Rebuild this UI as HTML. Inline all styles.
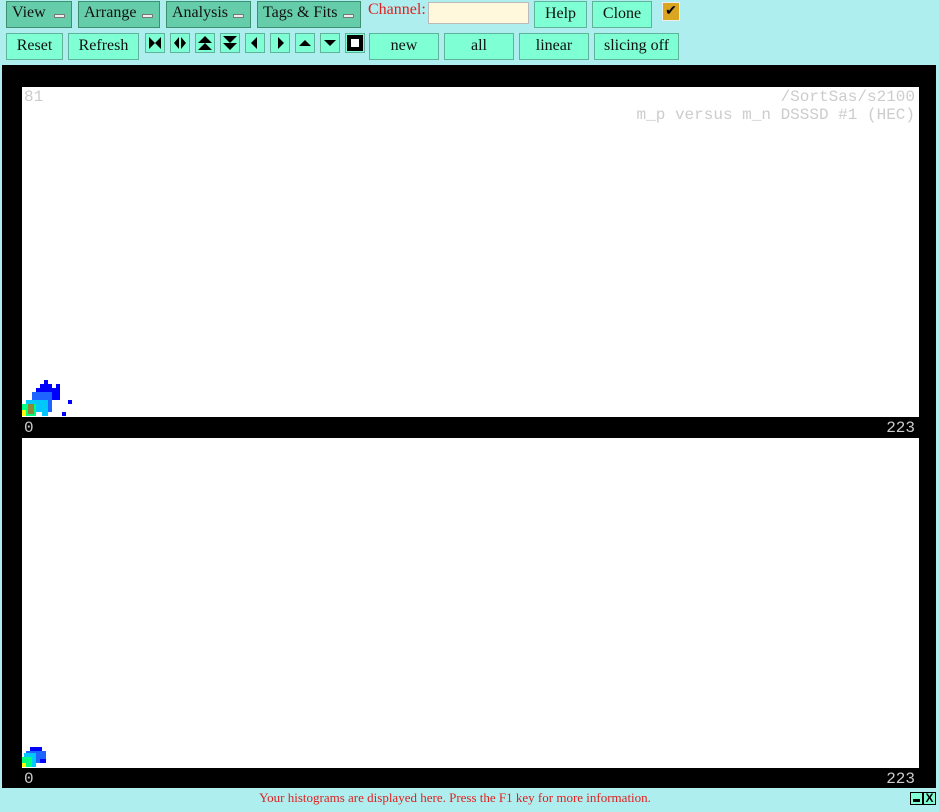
<!DOCTYPE html>
<html><head><meta charset="utf-8"><style>
*{box-sizing:border-box;margin:0;padding:0}
body{width:939px;height:812px;background:#afeeee;font-family:"Liberation Serif",serif;position:relative;overflow:hidden}
.b{position:absolute;border:1px solid #5fb39a;font-size:16px;text-align:center;color:#111}
.m{background:#66cdaa;border-color:#3d8f70;text-align:left;padding-left:5px;line-height:22px}
.m i{position:absolute;right:6px;top:12px;width:11px;height:4px;background:#eee;border:1px solid #777}
.g{background:#7fffd4;line-height:24px}
.a{position:absolute;top:33px;width:20px;height:20px;background:#7fffd4;border:1px solid #5fb39a}
.a svg{display:block}
#blk{position:absolute;left:2px;top:65px;width:934px;height:723px;background:#000}
.p{position:absolute;left:22px;width:897px;background:#fff}
.t{position:absolute;font-family:"Liberation Mono",monospace;font-size:16px;line-height:18px;color:#ccc}
</style></head><body>
<div class="b m" style="left:6px;top:1px;width:66px;height:27px">View<i></i></div>
<div class="b m" style="left:78px;top:1px;width:82px;height:27px">Arrange<i></i></div>
<div class="b m" style="left:166px;top:1px;width:85px;height:27px">Analysis<i></i></div>
<div class="b m" style="left:257px;top:1px;width:104px;height:27px">Tags &amp; Fits<i></i></div>
<div style="position:absolute;left:368px;top:1px;color:#e02020;font-size:16px">Channel:</div>
<div style="position:absolute;left:428px;top:2px;width:101px;height:22px;background:#fff8dc;border:1px solid #bbb"></div>
<div class="b g" style="left:534px;top:1px;width:53px;height:27px">Help</div>
<div class="b g" style="left:592px;top:1px;width:60px;height:27px">Clone</div>
<div style="position:absolute;left:662px;top:2px;width:18px;height:19px;background:#daa520;border:1px solid #eee;font-size:14px;line-height:17px;text-align:center">✔</div>
<div class="b g" style="left:6px;top:33px;width:57px;height:27px">Reset</div>
<div class="b g" style="left:68px;top:33px;width:71px;height:27px">Refresh</div>
<div class="a" style="left:145px"><svg width="18" height="18"><path d="M3 3L9 9L3 15ZM15 3L9 9L15 15Z"/></svg></div>
<div class="a" style="left:170px"><svg width="18" height="18"><path d="M8 3L3 9L8 15ZM10 3L15 9L10 15Z"/></svg></div>
<div class="a" style="left:195px"><svg width="18" height="18"><path d="M9 2L16 9H2ZM9 9L16 16H2Z"/></svg></div>
<div class="a" style="left:220px"><svg width="18" height="18"><path d="M2 2H16L9 9ZM2 9H16L9 16Z"/></svg></div>
<div class="a" style="left:245px"><svg width="18" height="18"><path d="M11 3L5 9L11 15Z"/></svg></div>
<div class="a" style="left:270px"><svg width="18" height="18"><path d="M7 3L13 9L7 15Z"/></svg></div>
<div class="a" style="left:295px"><svg width="18" height="18"><path d="M3 12L9 6L15 12Z"/></svg></div>
<div class="a" style="left:320px"><svg width="18" height="18"><path d="M3 6L9 12L15 6Z"/></svg></div>
<div class="a" style="left:345px"><svg width="18" height="18"><rect x="1" y="1" width="16" height="16"/><rect x="5" y="5" width="8" height="8" fill="#fff"/></svg></div>
<div class="b g" style="left:369px;top:33px;width:70px;height:27px">new</div>
<div class="b g" style="left:444px;top:33px;width:70px;height:27px">all</div>
<div class="b g" style="left:519px;top:33px;width:70px;height:27px">linear</div>
<div class="b g" style="left:594px;top:33px;width:85px;height:27px">slicing off</div>

<div id="blk"></div>
<div class="p" style="top:87px;height:330px"></div>
<div class="t" style="left:24px;top:88px">81</div>
<div class="t" style="right:24px;top:88px;text-align:right">/SortSas/s2100<br>m_p versus m_n DSSSD #1 (HEC)</div>
<svg style="position:absolute;left:22px;top:380px" width="60" height="37">
<g fill="#0000ff"><rect x="22" y="0" width="4" height="4"/><rect x="18" y="4" width="12" height="4"/><rect x="34" y="4" width="4" height="8"/><rect x="14" y="8" width="20" height="4"/><rect x="46" y="20" width="4" height="4"/><rect x="40" y="32" width="4" height="4"/><rect x="30" y="12" width="8" height="8"/></g>
<g fill="#1e64ff"><rect x="10" y="12" width="20" height="8"/><rect x="6" y="20" width="24" height="12"/></g>
<g fill="#00c8ff"><rect x="4" y="20" width="16" height="12"/><rect x="20" y="20" width="6" height="16"/></g>
<g fill="#00ff80"><rect x="0" y="24" width="14" height="12"/></g>
<rect x="0" y="30" width="4" height="6" fill="#ff0"/>
<rect x="6" y="24" width="6" height="10" fill="#8a8a3a"/>
</svg>
<div class="t" style="left:24px;top:419px">0</div>
<div class="t" style="right:24px;top:419px">223</div>

<div class="p" style="top:438px;height:330px"></div>
<svg style="position:absolute;left:22px;top:747px" width="30" height="21">
<rect x="8" y="0" width="12" height="4" fill="#0000ff"/><rect x="4" y="4" width="20" height="12" fill="#1e64ff"/><rect x="18" y="12" width="6" height="4" fill="#0000ff"/>
<rect x="2" y="6" width="12" height="14" fill="#00c8ff"/><rect x="0" y="10" width="10" height="10" fill="#00ff80"/><rect x="0" y="16" width="4" height="4" fill="#ff0"/>
</svg>
<div class="t" style="left:24px;top:770px">0</div>
<div class="t" style="right:24px;top:770px">223</div>

<div style="position:absolute;left:0;top:790px;width:910px;text-align:center;color:#e02020;font-size:13px">Your histograms are displayed here. Press the F1 key for more information.</div>
<div style="position:absolute;left:910px;top:792px;width:13px;height:13px;background:#7fffd4;border:1px solid #000"><div style="position:absolute;left:2px;top:6px;width:7px;height:3px;background:#000"></div></div>
<div style="position:absolute;left:923px;top:792px;width:13px;height:13px;background:#7fffd4;border:1px solid #000;font:bold 12px 'Liberation Sans',sans-serif;line-height:11px;text-align:center">X</div>
</body></html>
